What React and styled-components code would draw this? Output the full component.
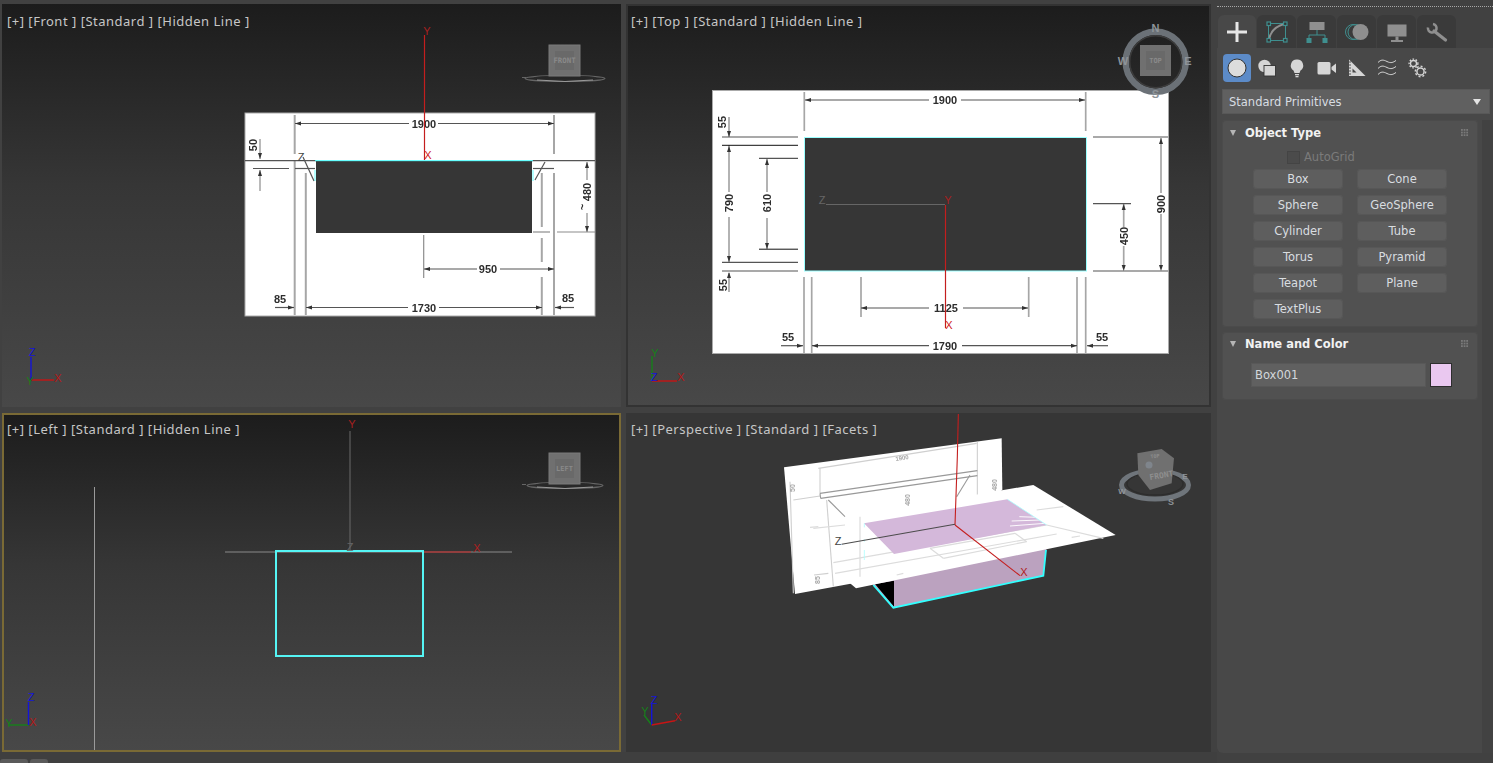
import React from "react";
import styled, { createGlobalStyle } from "styled-components";

const Global = createGlobalStyle`
  html, body { margin: 0; padding: 0; background: #414141; overflow: hidden; }
  #root { width: 1493px; height: 763px; }
`;

const Page = styled.div`
  display: grid;
  grid-template-columns: 1217px 276px;
  width: 1493px;
  height: 763px;
  background: #414141;
  font-family: "DejaVu Sans", sans-serif;
`;
const Workspace = styled.div`
  display: flex;
  flex-direction: column;
`;
const ViewportGrid = styled.div`
  display: grid;
  grid-template-columns: 619px 585px;
  grid-template-rows: 403px 339px;
  gap: 6px 5px;
  padding: 4px 0 0 2px;
`;
const Viewport = styled.section`
  position: relative;
  overflow: hidden;
  padding: ${(p) => p.$top}px 0 0 5px;
  background: ${(p) => (p.$flat ? "#363636" : "linear-gradient(180deg, #1c1c1c 0%, #363636 45%, #484848 100%)")};
  box-shadow: inset 0 0 0 2px ${(p) => p.$edge};
`;
const Canvas = styled.svg`
  position: absolute;
  inset: 0;
  width: 100%;
  height: 100%;
  display: block;
`;
const ViewLabel = styled.div`
  position: relative;
  z-index: 1;
  font: 13px/18px "Noto Sans", sans-serif;
  letter-spacing: 0.5px;
  color: #c6c6c6;
  white-space: pre;
`;
const SheetInk = styled.g`
  filter: blur(0.45px);
`;
const DimText = styled.text`
  font: bold 11px "Liberation Sans", sans-serif;
  fill: #2d2d2d;
  text-anchor: middle;
  dominant-baseline: central;
`;
const FadedText = styled.text`
  font: bold 7px "Liberation Sans", sans-serif;
  fill: #a8a8a8;
  text-anchor: middle;
  dominant-baseline: central;
`;
const AxisText = styled.text`
  font: 11px "Liberation Sans", sans-serif;
  fill: ${(p) => p.$c};
  text-anchor: middle;
  dominant-baseline: central;
`;
const CubeText = styled.text`
  font: bold ${(p) => p.$s || 7}px "DejaVu Sans Mono", monospace;
  fill: #8a8a8a;
  text-anchor: middle;
  dominant-baseline: central;
`;
const CompassText = styled.text`
  font: bold ${(p) => p.$s || 11}px "Liberation Sans", sans-serif;
  fill: #8f9499;
  text-anchor: middle;
  dominant-baseline: central;
`;
const BottomStrip = styled.div`
  display: flex;
  align-items: flex-end;
  gap: 2px;
  height: 11px;
  background: #3f3f3f;
`;
const LayoutTab = styled.div`
  width: ${(p) => p.$w}px;
  height: 4px;
  background: #5a5a5a;
  border-radius: 3px 3px 0 0;
`;

const Panel = styled.aside`
  display: flex;
  flex-direction: column;
  height: 753px;
`;
const DragHandle = styled.div`
  height: 15px;
  box-sizing: border-box;
  padding-top: 6px;
  &::before {
    content: "";
    display: block;
    border-top: 1px dotted #a8a8a8;
  }
`;
const TabRow = styled.div`
  display: flex;
  gap: 1px;
  padding-left: 1px;
  height: 33px;
`;
const Tab = styled.div`
  width: ${(p) => (p.$on ? 38 : 39)}px;
  display: flex;
  align-items: center;
  justify-content: center;
  border-radius: 6px 6px 0 0;
  background: ${(p) => (p.$on ? "#484848" : "#3a3a3a")};
`;
const PanelBody = styled.div`
  flex: 1;
  display: flex;
  flex-direction: column;
  background: #484848;
  border-radius: 0 0 6px 6px;
  min-height: 0;
`;
const ToolRow = styled.div`
  display: flex;
  gap: 2px;
  padding: 6px 0 0 6px;
`;
const ToolButton = styled.div`
  width: 28px;
  height: 28px;
  display: flex;
  align-items: center;
  justify-content: center;
  border-radius: 4px;
  background: ${(p) => (p.$on ? "#5c8bc8" : "transparent")};
`;
const Dropdown = styled.div`
  display: flex;
  align-items: center;
  justify-content: space-between;
  height: 25px;
  box-sizing: border-box;
  margin: 7px 3px 0 5px;
  padding: 1px 9px 0 7px;
  background: #606060;
  box-shadow: inset 0 0 0 1px #585858;
  color: #d8dde2;
  font-size: 11.5px;
`;
const DropArrow = styled.span`
  width: 0;
  height: 0;
  border-left: 4.5px solid transparent;
  border-right: 4.5px solid transparent;
  border-top: 6px solid #e4e4e4;
`;
const RolloutArea = styled.div`
  flex: 1;
  display: flex;
  margin-top: 6px;
  min-height: 0;
`;
const Rollouts = styled.div`
  width: 265px;
  display: flex;
  flex-direction: column;
  gap: 5px;
  padding: 0 4px 0 5px;
  box-sizing: border-box;
`;
const Gutter = styled.div`
  flex: 1;
  background: #424242;
`;
const Rollout = styled.div`
  height: ${(p) => p.$h}px;
  box-sizing: border-box;
  padding-top: ${(p) => p.$pt || 0}px;
  background: #515151;
  border-radius: 4px;
  box-shadow: inset 0 0 0 1px #4b4b4b;
`;
const RolloutHead = styled.div`
  display: flex;
  align-items: center;
  height: 24px;
  padding: 0 9px 0 8px;
`;
const HeadArrow = styled.span`
  width: 0;
  height: 0;
  margin-right: 8px;
  border-left: 3.5px solid transparent;
  border-right: 3.5px solid transparent;
  border-top: 6px solid #b5b5b5;
`;
const RolloutTitle = styled.span`
  flex: 1;
  font-weight: bold;
  font-size: 11.5px;
  color: #f2f2f2;
  padding-left: 1px;
`;
const Grip = styled.span`
  width: 8px;
  height: 8px;
  background-image: radial-gradient(circle at 1px 1px, #7a7a7a 0.8px, transparent 0.9px);
  background-size: 2.66px 2.66px;
`;
const AutoGridRow = styled.div`
  display: flex;
  align-items: center;
  gap: 4px;
  height: 14px;
  margin: 5px 0 0 65px;
  color: #7b7b7b;
  font-size: 11.5px;
`;
const CheckBox = styled.span`
  width: 11px;
  height: 11px;
  background: #4b4b4b;
  border: 1px solid #444;
`;
const ButtonGrid = styled.div`
  display: grid;
  grid-template-columns: 90px 90px;
  grid-auto-rows: 20px;
  gap: 6px 14px;
  margin: 5px 0 0 31px;
`;
const PrimButton = styled.div`
  display: flex;
  align-items: center;
  justify-content: center;
  border-radius: 4px;
  background: #5e5e5e;
  box-shadow: inset 0 0 0 1px #575757;
  color: #d9dde0;
  font-size: 11.5px;
`;
const NameRow = styled.div`
  display: flex;
  gap: 4px;
  margin: 7px 0 0 29px;
`;
const NameField = styled.div`
  width: 175px;
  height: 24px;
  box-sizing: border-box;
  padding-left: 4px;
  line-height: 24px;
  background: #606060;
  box-shadow: inset 0 0 0 1px #585858;
  color: #d4d8dc;
  font-size: 11.5px;
`;
const Swatch = styled.div`
  width: 22px;
  height: 24px;
  box-sizing: border-box;
  background: #eac8f0;
  border: 1px solid #2e2e2e;
`;

const Lines = ({ data, c = "#8c8c8c", w = 1.4 }) => (
  <g stroke={c} strokeWidth={w} fill="none">
    {data.map((d, i) => (
      <line key={i} x1={d[0]} y1={d[1]} x2={d[2]} y2={d[3]} />
    ))}
  </g>
);

const Arrows = ({ data }) => (
  <g fill="#333">
    {data.map(([x, y, d], i) => {
      const m = {
        l: `${x},${y} ${x + 6},${y - 2} ${x + 6},${y + 2}`,
        r: `${x},${y} ${x - 6},${y - 2} ${x - 6},${y + 2}`,
        u: `${x},${y} ${x - 2},${y + 6} ${x + 2},${y + 6}`,
        d: `${x},${y} ${x - 2},${y - 6} ${x + 2},${y - 6}`,
      };
      return <polygon key={i} points={m[d]} />;
    })}
  </g>
);

const Rot = ({ x, y, children }) => (
  <DimText x={x} y={y} transform={`rotate(-90 ${x} ${y})`}>
    {children}
  </DimText>
);

const FlatGizmo = ({ x, y, label, ringY, rx }) => (
  <g>
    <ellipse cx={x + 16} cy={ringY} rx={rx} ry={3} fill="none" stroke="#666" strokeWidth="1.2" />
    <ellipse cx={x + 16} cy={ringY - 0.5} rx={rx - 9} ry={1.8} fill="none" stroke="#2a2a2a" strokeWidth="1" />
    <path d={`M${x - 12} ${ringY + 1.5}Q${x + 16} ${ringY + 4.5} ${x + 44} ${ringY + 1.5}`} fill="none" stroke="#9a9a9a" strokeWidth="1" />
    <line x1={x - 27} y1={ringY - 1} x2={x - 23} y2={ringY - 1} stroke="#666" />
    <rect x={x} y={y} width={31} height={31} fill="#707070" stroke="#7a7a7a" />
    <rect x={x + 6} y={y + 6} width={19} height={19} fill="#696969" />
    <CubeText x={x + 15.5} y={y + 15.5} $s={label.length > 4 ? 7.4 : 7}>{label}</CubeText>
  </g>
);

const FrontSheet = () => (
  <g>
    <rect x="245" y="113" width="350" height="203" fill="#fff" stroke="#aaa" />
    <SheetInk>
      <Lines
        c="#a6a6a6"
        w={2}
        data={[
          [294.7, 115, 294.7, 154], [294.7, 161, 294.7, 315], [554, 115, 554, 154], [554, 173, 554, 315],
          [305.8, 173, 305.8, 315], [541.8, 173, 541.8, 227], [541.8, 238, 541.8, 262], [541.8, 277, 541.8, 315],
        ]}
      />
      <Lines
        c="#555"
        w={1.2}
        data={[
          [295, 123.5, 409, 123.5], [438, 123.5, 554, 123.5], [245, 160.7, 316, 160.7], [532, 160.7, 595, 160.7],
          [295, 168.5, 315, 168.5], [533, 168.5, 554, 168.5], [253, 168.5, 289, 168.5], [303, 157, 314, 181], [545, 162, 535, 180],
          [424, 269, 477, 269], [500, 269, 554, 269], [306, 307.5, 408, 307.5], [439, 307.5, 542, 307.5],
          [275, 307.5, 294, 307.5], [574, 307.5, 555, 307.5],
        ]}
      />
      <Lines
        c="#8c8c8c"
        w={1.2}
        data={[
          [260, 139, 260, 159], [260, 170, 260, 191], [587, 162, 587, 180], [587, 213, 587, 232],
          [533, 232, 550, 232], [557, 232, 595, 232], [423.7, 235, 423.7, 278],
        ]}
      />
      <Arrows
        data={[
          [295, 123.5, "l"], [554, 123.5, "r"], [424, 269, "l"], [554, 269, "r"], [306, 307.5, "l"], [542, 307.5, "r"],
          [294, 307.5, "r"], [555, 307.5, "l"], [260, 159, "d"], [260, 170, "u"], [587, 162, "u"], [587, 232, "d"],
        ]}
      />
      <DimText x="424" y="123.5">1900</DimText>
      <DimText x="488" y="269">950</DimText>
      <DimText x="424" y="307.5">1730</DimText>
      <DimText x="280" y="299">85</DimText>
      <DimText x="568" y="298">85</DimText>
      <Rot x="253" y="145">50</Rot>
      <Rot x="587" y="192">480</Rot>
      <Rot x="582" y="207">~</Rot>
    </SheetInk>
    <rect x="316" y="161" width="216" height="72" fill="#363636" />
    <line x1="315" y1="160.7" x2="533" y2="160.7" stroke="#4ff" strokeWidth="1" />
    <line x1="315" y1="170" x2="315" y2="181" stroke="#4ff" strokeWidth="0.8" />
    <line x1="533" y1="170" x2="533" y2="181" stroke="#4ff" strokeWidth="0.8" />
    <line x1="424.5" y1="35" x2="424.5" y2="160" stroke="#c41e1e" strokeWidth="1.2" />
    <AxisText x="427" y="31" $c="#a82020">Y</AxisText>
    <AxisText x="428" y="155" $c="#d02020">X</AxisText>
    <AxisText x="301" y="157" $c="#444">Z</AxisText>
  </g>
);

const TopSheet = () => (
  <g>
    <rect x="712.5" y="90.5" width="456" height="263" fill="#fff" stroke="#aaa" />
    <SheetInk>
      <Lines
        c="#a6a6a6"
        w={1.7}
        data={[
          [804.3, 92, 804.3, 131], [1085.7, 92, 1085.7, 131], [804, 277, 804, 353], [811.7, 277, 811.7, 353],
          [1077, 277, 1077, 353], [1085.7, 277, 1085.7, 353], [861, 277, 861, 317], [1028.7, 277, 1028.7, 317],
          [729, 145, 729, 192], [729, 217, 729, 262], [767, 158, 767, 192], [767, 218, 767, 249],
          [1123.7, 204, 1123.7, 227], [1123.7, 246, 1123.7, 268], [1161, 138, 1161, 193], [1161, 214, 1161, 268],
          [729, 117, 729, 137], [729, 273, 729, 292],
        ]}
      />
      <Lines
        c="#555"
        w={1.2}
        data={[
          [805, 100, 929, 100], [961, 100, 1085, 100], [722, 137, 798, 137], [759, 158.3, 798, 158.3],
          [722, 262.3, 798, 262.3], [722, 271, 798, 271], [1093, 137, 1168, 137], [1093, 203.7, 1131, 203.7],
          [1093, 271, 1168, 271], [861, 308, 929, 308], [963, 308, 1028, 308], [812, 345.7, 929, 345.7],
          [962, 345.7, 1077, 345.7], [781, 345.7, 803, 345.7], [1108, 345.7, 1087, 345.7],
        ]}
      />
      <Lines c="#111" w={1} data={[[722, 145.3, 798, 145.3], [759, 249.2, 798, 249.2]]} />
      <Arrows
        data={[
          [805, 100, "l"], [1085, 100, "r"], [861, 308, "l"], [1028, 308, "r"], [812, 345.7, "l"], [1077, 345.7, "r"],
          [803, 345.7, "r"], [1087, 345.7, "l"], [729, 137, "d"], [729, 146, "u"], [729, 262, "d"], [729, 272, "u"],
          [767, 159, "u"], [767, 249, "d"], [1123.7, 204, "u"], [1123.7, 271, "d"], [1161, 138, "u"], [1161, 271, "d"],
        ]}
      />
      <DimText x="945" y="100">1900</DimText>
      <DimText x="946" y="308">1125</DimText>
      <DimText x="945" y="345.7">1790</DimText>
      <DimText x="788" y="337">55</DimText>
      <DimText x="1102" y="337">55</DimText>
      <Rot x="722" y="122">55</Rot>
      <Rot x="729" y="203">790</Rot>
      <Rot x="767" y="203">610</Rot>
      <Rot x="723" y="285">55</Rot>
      <Rot x="1123.7" y="236">450</Rot>
      <Rot x="1161" y="204">900</Rot>
    </SheetInk>
    <rect x="804.5" y="137.5" width="282" height="133.5" fill="#363636" stroke="#9ff" strokeWidth="1" />
    <line x1="826" y1="204.5" x2="945" y2="204.5" stroke="#666" strokeWidth="1" />
    <line x1="945.5" y1="205" x2="945.5" y2="328" stroke="#c41e1e" strokeWidth="1.2" />
    <AxisText x="822" y="200" $c="#666">Z</AxisText>
    <AxisText x="948" y="200" $c="#a82020">Y</AxisText>
    <AxisText x="949" y="325" $c="#d02020">X</AxisText>
  </g>
);

const TopGizmo = () => (
  <g>
    <circle cx="1155.7" cy="61.7" r="30" fill="none" stroke="#6b7177" strokeWidth="6.5" />
    <circle cx="1155.7" cy="61.7" r="26" fill="none" stroke="#3c3c3c" strokeWidth="1.5" />
    <rect x="1140" y="45" width="31" height="31" fill="#707070" />
    <rect x="1146" y="51" width="19" height="19" fill="#696969" />
    <CubeText x="1155.5" y="60.5" $s={7}>TOP</CubeText>
    <CompassText x="1155.5" y="28">N</CompassText>
    <CompassText x="1155.5" y="94">S</CompassText>
    <CompassText x="1123" y="61">W</CompassText>
    <CompassText x="1188" y="61">E</CompassText>
  </g>
);

const PerspSheets = () => {
  const p = (x, y) => `${770 + x / 3},${410 + y / 3}`;
  const poly = (a) => a.map(([x, y]) => p(x, y)).join(" ");
  const seg = (a) => a.map(([x1, y1, x2, y2]) => [770 + x1 / 3, 410 + y1 / 3, 770 + x2 / 3, 410 + y2 / 3]);
  return (
    <g>
      <polygon points={poly([[42, 172], [695, 85], [697, 240], [250, 520], [75, 552]])} fill="#fff" />
      <SheetInk>
        <Lines c="#cfcfcf" w={1.1} data={seg([[145, 175, 620, 100], [622, 95, 622, 260], [150, 175, 150, 250], [70, 270, 150, 258], [170, 270, 190, 530], [60, 215, 70, 550], [132, 495, 175, 490]])} />
        <Lines c="#999" w={1.1} data={seg([[150, 250, 622, 182], [152, 265, 622, 197], [150, 250, 152, 265], [600, 195, 560, 260], [175, 270, 225, 320]])} />
        <FadedText x="902" y="458" transform="rotate(-8 902 458)" style={{ fontSize: 6 }}>1900</FadedText>
        <FadedText x="792" y="488" transform="rotate(-90 792 488)">50</FadedText>
        <FadedText x="907" y="500" transform="rotate(-90 907 500)">480</FadedText>
        <FadedText x="994" y="485" transform="rotate(-90 994 485)">480</FadedText>
        <FadedText x="817" y="580" transform="rotate(-90 817 580)">85</FadedText>
      </SheetInk>
      <polygon points={poly([[310, 525], [370, 593], [820, 497], [830, 410], [310, 480]])} fill="#bba2bf" />
      <polygon points={poly([[315, 522], [372, 512], [372, 590]])} fill="#000" />
      <polyline points={poly([[310, 525], [370, 593], [820, 497], [828, 420]])} fill="none" stroke="#3ff" strokeWidth="1.8" />
      <polygon points={poly([[262, 315], [790, 225], [1037, 375], [258, 535], [240, 520]])} fill="#fff" />
      <SheetInk>
        <Lines c="#dcdcdc" w={1.2} data={seg([[190, 458, 830, 345], [195, 490, 860, 372], [480, 415, 520, 445], [520, 445, 770, 395], [770, 395, 735, 370], [480, 415, 735, 370], [130, 355, 225, 345], [270, 320, 270, 500], [800, 300, 880, 290], [830, 345, 1000, 385], [380, 495, 400, 490], [905, 382, 930, 378], [120, 352, 145, 350]])} />
      </SheetInk>
      <polygon points={poly([[282, 340], [712, 268], [830, 345], [372, 432]])} fill="#d4b8da" />
      <Lines c="#fff" w={0.9} data={seg([[748, 320, 800, 322], [725, 333, 815, 330], [720, 348, 825, 340]])} />
      <Lines c="#a9ffff" w={0.8} data={seg([[712, 268, 830, 345], [283, 340, 283, 352], [283, 388, 283, 395], [283, 420, 283, 450]])} />
      <polyline points={poly([[565, 12], [562, 140], [555, 345]])} fill="none" stroke="#c41e1e" strokeWidth="1.1" />
      <polyline points={poly([[555, 343], [215, 403]])} fill="none" stroke="#4c4c4c" strokeWidth="1.1" />
      <polyline points={poly([[555, 345], [750, 497]])} fill="none" stroke="#c41e1e" strokeWidth="1.1" />
      <AxisText x="838" y="541" $c="#444">Z</AxisText>
      <AxisText x="1024" y="572" $c="#b02020">X</AxisText>
    </g>
  );
};

const PerspGizmo = () => {
  const p = (a) => a.map(([x, y]) => `${1100 + x / 3},${435 + y / 3}`).join(" ");
  return (
    <g>
      <ellipse cx="1155" cy="485" rx="33.5" ry="14" fill="none" stroke="#6f757b" strokeWidth="5" />
      <ellipse cx="1155" cy="484" rx="28" ry="11" fill="none" stroke="#2d2d2d" strokeWidth="1.4" />
      <polygon points={p([[112, 55], [185, 42], [222, 70], [215, 145], [150, 165], [115, 120]])} fill="#707070" />
      <circle cx="1149" cy="465" r="3.5" fill="#7f858c" />
      <text x="1161.5" y="475.5" transform="rotate(-10 1161.5 475.5)" textAnchor="middle" dominantBaseline="central" fill="#8e8e8e" style={{ font: 'bold 8px "DejaVu Sans Mono", monospace' }}>FRONT</text>
      <text x="1155" y="456" transform="rotate(-8 1155 456)" textAnchor="middle" dominantBaseline="central" fill="#8e8e8e" style={{ font: 'bold 5px "DejaVu Sans Mono", monospace' }}>TOP</text>
      <CompassText x="1122" y="491" $s={8}>W</CompassText>
      <CompassText x="1171" y="502" $s={9}>S</CompassText>
      <CompassText x="1185" y="476" $s={8}>E</CompassText>
    </g>
  );
};

const Triad = ({ o, g, b, r, gl, bl, rl }) => (
  <g fill="none" strokeWidth="1.4">
    <line x1={o[0]} y1={o[1]} x2={g[0]} y2={g[1]} stroke="#16801a" />
    <line x1={o[0]} y1={o[1]} x2={b[0]} y2={b[1]} stroke="#1414d8" />
    <line x1={o[0]} y1={o[1]} x2={r[0]} y2={r[1]} stroke="#c81414" />
    <AxisText x={gl[0]} y={gl[1]} $c="#16801a">Y</AxisText>
    <AxisText x={bl[0]} y={bl[1]} $c="#1414d8">Z</AxisText>
    <AxisText x={rl[0]} y={rl[1]} $c="#b51818">X</AxisText>
  </g>
);

const ic = { width: 24, height: 24, viewBox: "0 0 24 24" };
const TEAL = "#3f8f8f";
const G = "#8f8f8f";
const L = "#d6d6d6";

const IconPlus = () => (
  <svg {...ic}><path d="M12 2v20M2 12h20" stroke="#e6e6e6" strokeWidth="3" /></svg>
);
const IconModify = () => (
  <svg {...ic} fill="none">
    <rect x="3.5" y="3.5" width="17" height="17" stroke={TEAL} strokeWidth="1" />
    <path d="M4 20Q6 7 20 4" stroke={G} strokeWidth="2" />
    {[[2, 2], [18.5, 2], [2, 18.5], [18.5, 18.5]].map(([x, y]) => (
      <rect key={x + "" + y} x={x} y={y} width="3.5" height="3.5" fill="#333" stroke={TEAL} strokeWidth="1.2" />
    ))}
  </svg>
);
const IconHierarchy = () => (
  <svg {...ic} fill="none">
    <rect x="4.5" y="2" width="15" height="8" fill={G} />
    <path d="M12 10v5M4 18v-3h16v3" stroke={TEAL} strokeWidth="1" />
    <rect x="1.5" y="18" width="5" height="5" fill={TEAL} />
    <rect x="17.5" y="18" width="5" height="5" fill={TEAL} />
  </svg>
);
const IconMotion = () => (
  <svg {...ic} fill="none">
    <circle cx="8" cy="12" r="7.5" stroke={TEAL} strokeWidth="1" />
    <circle cx="10.5" cy="12" r="7.5" stroke={TEAL} strokeWidth="1" />
    <circle cx="15.5" cy="12" r="8" fill={G} />
  </svg>
);
const IconDisplay = () => (
  <svg {...ic}>
    <rect x="2.5" y="4.5" width="19" height="12" fill={G} />
    <rect x="10.5" y="16.5" width="3" height="3.5" fill={G} />
    <rect x="6" y="20" width="12" height="2" fill={G} />
  </svg>
);
const IconWrench = () => (
  <svg {...ic} fill="none" stroke={G}>
    <path d="M8 4A4.3 4.3 0 1 1 3 7.5" strokeWidth="2.6" />
    <path d="M9 11L20.5 20" strokeWidth="3.2" strokeLinecap="round" />
  </svg>
);
const IconSphere = () => (
  <svg {...ic}><circle cx="12" cy="12" r="9" fill="#dcdcdc" stroke="#333" strokeWidth="1" /></svg>
);
const IconShapes = () => (
  <svg {...ic}>
    <circle cx="9.5" cy="10" r="6.2" fill={L} />
    <rect x="9" y="9.5" width="11.5" height="10.5" fill={L} stroke="#333" strokeWidth="0.9" />
  </svg>
);
const IconBulb = () => (
  <svg {...ic}>
    <path d="M12 3.5a6 6 0 0 0-3.5 11l1 2.5h5l1-2.5a6 6 0 0 0-3.5-11z" fill={L} />
    <rect x="10" y="18" width="4" height="1.3" fill={L} />
    <rect x="10.5" y="20" width="3" height="1.3" fill={L} />
  </svg>
);
const IconCamera = () => (
  <svg {...ic}>
    <rect x="2.5" y="6" width="13" height="12.5" rx="1.5" fill={L} />
    <path d="M16.5 11L21 7.5V17L16.5 13.5z" fill={L} />
  </svg>
);
const IconRuler = () => (
  <svg {...ic}>
    <path d="M4 3.5V20H20.5z" fill={L} />
    <path d="M7.5 12.5V16.5H11.5z" fill="#4a4a4a" />
    <path d="M4 6h2M4 9h2M4 12h2M4 15h2M4 18h2" stroke="#333" strokeWidth="0.8" />
  </svg>
);
const IconWaves = () => (
  <svg {...ic} fill="none" stroke={L} strokeWidth="1">
    <path d="M3 6.5c3-3 5-3 9-1s6 1 9-1" />
    <path d="M3 12.5c3-3 5-3 9-1s6 1 9-1" />
    <path d="M3 18.5c3-3 5-3 9-1s6 1 9-1" />
  </svg>
);
const IconGears = () => (
  <svg {...ic} fill="none" stroke={L}>
    <circle cx="8.5" cy="7.5" r="3" strokeWidth="1.3" />
    <circle cx="8.5" cy="7.5" r="4.4" strokeWidth="1.3" strokeDasharray="1.6 1.6" />
    <circle cx="15.5" cy="15.5" r="3.6" strokeWidth="1.5" />
    <circle cx="15.5" cy="15.5" r="5.2" strokeWidth="1.4" strokeDasharray="2 2" />
  </svg>
);

const tabs = [IconPlus, IconModify, IconHierarchy, IconMotion, IconDisplay, IconWrench];
const tools = [IconSphere, IconShapes, IconBulb, IconCamera, IconRuler, IconWaves, IconGears];
const prims = ["Box", "Cone", "Sphere", "GeoSphere", "Cylinder", "Tube", "Torus", "Pyramid", "Teapot", "Plane", "TextPlus"];

export default function App() {
  return (
    <Page>
      <Global />
      <Workspace>
        <ViewportGrid>
          <Viewport $top={8} $edge="transparent">
            <Canvas viewBox="2 4 619 403">
              <FrontSheet />
              <FlatGizmo x={549} y={45} label="FRONT" ringY={78.5} rx={40} />
              <Triad o={[31, 380]} g={[31, 380]} b={[31, 357]} r={[54, 380]} gl={[30, 381]} bl={[32, 352]} rl={[58, 378]} />
            </Canvas>
            <ViewLabel>[+] [Front ] [Standard ] [Hidden Line ]</ViewLabel>
          </Viewport>
          <Viewport $top={8} $edge="#333333">
            <Canvas viewBox="626 4 585 403">
              <TopSheet />
              <TopGizmo />
              <Triad o={[652, 381]} g={[652, 356]} b={[652, 381]} r={[677, 381]} gl={[655, 353]} bl={[654, 377]} rl={[681, 377]} />
            </Canvas>
            <ViewLabel>[+] [Top ] [Standard ] [Hidden Line ]</ViewLabel>
          </Viewport>
          <Viewport $top={7} $edge="#7a6a35">
            <Canvas viewBox="2 413 619 339">
              <line x1="94.5" y1="487" x2="94.5" y2="750" stroke="#9a9a9a" />
              <line x1="225" y1="552" x2="512" y2="552" stroke="#8a8a8a" />
              <line x1="350" y1="431" x2="350" y2="551" stroke="#6a6a6a" />
              <line x1="423" y1="552" x2="471" y2="552" stroke="#c41e1e" strokeWidth="1.2" />
              <rect x="276" y="551" width="147" height="105" fill="none" stroke="#55f5f5" strokeWidth="2" />
              <AxisText x="352" y="424" $c="#a82020">Y</AxisText>
              <AxisText x="477" y="548" $c="#b02020">X</AxisText>
              <AxisText x="350" y="547" $c="#666">Z</AxisText>
              <FlatGizmo x={549} y={453} label="LEFT" ringY={485.5} rx={38} />
              <Triad o={[28.5, 725]} g={[8, 725]} b={[28.5, 702]} r={[28.5, 725]} gl={[9, 723]} bl={[31, 697]} rl={[33, 722]} />
            </Canvas>
            <ViewLabel>[+] [Left ] [Standard ] [Hidden Line ]</ViewLabel>
          </Viewport>
          <Viewport $top={7} $edge="transparent" $flat>
            <Canvas viewBox="626 413 585 339">
              <PerspSheets />
              <PerspGizmo />
              <Triad o={[651.7, 725]} g={[644, 715]} b={[651.7, 703]} r={[675, 720.7]} gl={[645, 711]} bl={[654, 700]} rl={[678, 717]} />
            </Canvas>
            <ViewLabel>[+] [Perspective ] [Standard ] [Facets ]</ViewLabel>
          </Viewport>
        </ViewportGrid>
        <BottomStrip>
          <LayoutTab $w={28} />
          <LayoutTab $w={18} />
        </BottomStrip>
      </Workspace>
      <Panel>
        <DragHandle />
        <TabRow>
          {tabs.map((I, i) => (
            <Tab key={i} $on={i === 0}><I /></Tab>
          ))}
        </TabRow>
        <PanelBody>
          <ToolRow>
            {tools.map((I, i) => (
              <ToolButton key={i} $on={i === 0}><I /></ToolButton>
            ))}
          </ToolRow>
          <Dropdown>
            Standard Primitives
            <DropArrow />
          </Dropdown>
          <RolloutArea>
            <Rollouts>
              <Rollout $h={207} $pt={1}>
                <RolloutHead>
                  <HeadArrow />
                  <RolloutTitle>Object Type</RolloutTitle>
                  <Grip />
                </RolloutHead>
                <AutoGridRow>
                  <CheckBox />
                  AutoGrid
                </AutoGridRow>
                <ButtonGrid>
                  {prims.map((n) => (
                    <PrimButton key={n}>{n}</PrimButton>
                  ))}
                </ButtonGrid>
              </Rollout>
              <Rollout $h={68}>
                <RolloutHead>
                  <HeadArrow />
                  <RolloutTitle>Name and Color</RolloutTitle>
                  <Grip />
                </RolloutHead>
                <NameRow>
                  <NameField>Box001</NameField>
                  <Swatch />
                </NameRow>
              </Rollout>
            </Rollouts>
            <Gutter />
          </RolloutArea>
        </PanelBody>
      </Panel>
    </Page>
  );
}
